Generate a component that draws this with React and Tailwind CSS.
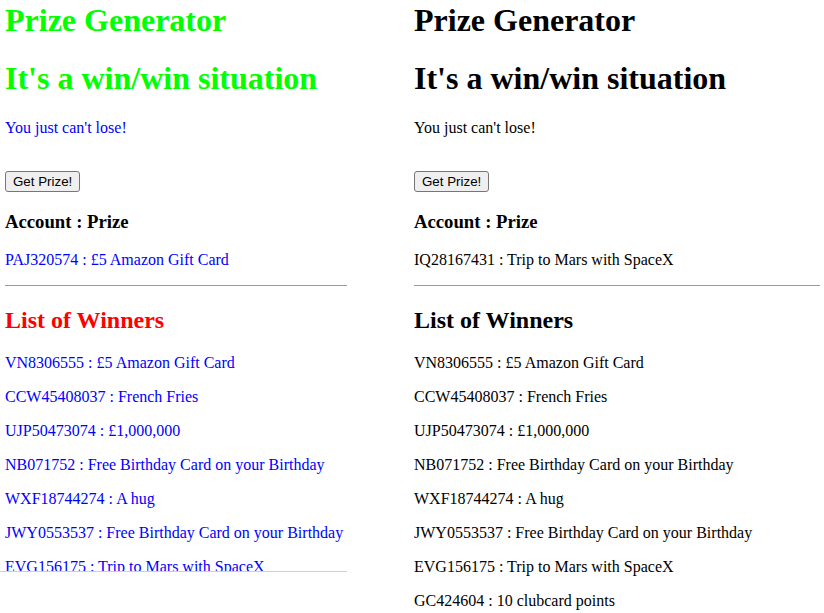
const winners = [
  ["VN8306555", "£5 Amazon Gift Card"],
  ["CCW45408037", "French Fries"],
  ["UJP50473074", "£1,000,000"],
  ["NB071752", "Free Birthday Card on your Birthday"],
  ["WXF18744274", "A hug"],
  ["JWY0553537", "Free Birthday Card on your Birthday"],
  ["EVG156175", "Trip to Mars with SpaceX"],
  ["GC424604", "10 clubcard points"],
];

function Generator({ colored, current }) {
  const green = colored ? "text-[#00ff00]" : "text-black";
  const blue = colored ? "text-[#0000ff]" : "text-black";
  const red = colored ? "text-[#ff0000]" : "text-black";

  return (
    <>
      <h1 className={`text-[32px] font-bold leading-[normal] mt-0 mb-[21.44px] ${green}`}>
        Prize Generator
      </h1>
      <h1 className={`text-[32px] font-bold leading-[normal] my-[21.44px] ${green}`}>
        It's a win/win situation
      </h1>
      <p className={`text-base leading-[normal] my-4 ${blue}`}>You just can't lose!</p>
      <div className="mt-4 pt-[18px]">
        <button
          className="block h-[21px] px-[7px] text-[13.33px] leading-none bg-[#efefef] border border-[#767676] rounded-[3px] text-black"
          style={{ fontFamily: "Arial, 'Liberation Sans', sans-serif" }}
        >
          Get Prize!
        </button>
      </div>
      <h3 className="text-[18.72px] font-bold leading-[normal] my-[18.72px] text-black">
        Account : Prize
      </h3>
      <p className={`text-base leading-[normal] my-4 ${blue}`}>
        {current[0]} : {current[1]}
      </p>
      <hr className="my-2 border-t border-[#9a9a9a]" />
      <h2 className={`text-2xl font-bold leading-[normal] mt-[20.5px] mb-[19.92px] ${red}`}>
        List of Winners
      </h2>
      {winners.map(([acc, prize]) => (
        <p key={acc} className={`text-base leading-[normal] my-4 ${blue}`}>
          {acc} : {prize}
        </p>
      ))}
    </>
  );
}

export default function App() {
  return (
    <div
      className="flex items-start bg-white"
      style={{ fontFamily: "'Liberation Serif', 'Times New Roman', serif" }}
    >
      <div className="w-[347px] h-[572px] shrink-0 overflow-hidden border-b border-[#d0d0d0] pl-[5px] pt-[2px]">
        <Generator colored current={["PAJ320574", "£5 Amazon Gift Card"]} />
      </div>
      <div className="ml-[62px] w-[411px] shrink-0 pl-[5px] pt-[2px]">
        <Generator current={["IQ28167431", "Trip to Mars with SpaceX"]} />
      </div>
    </div>
  );
}
